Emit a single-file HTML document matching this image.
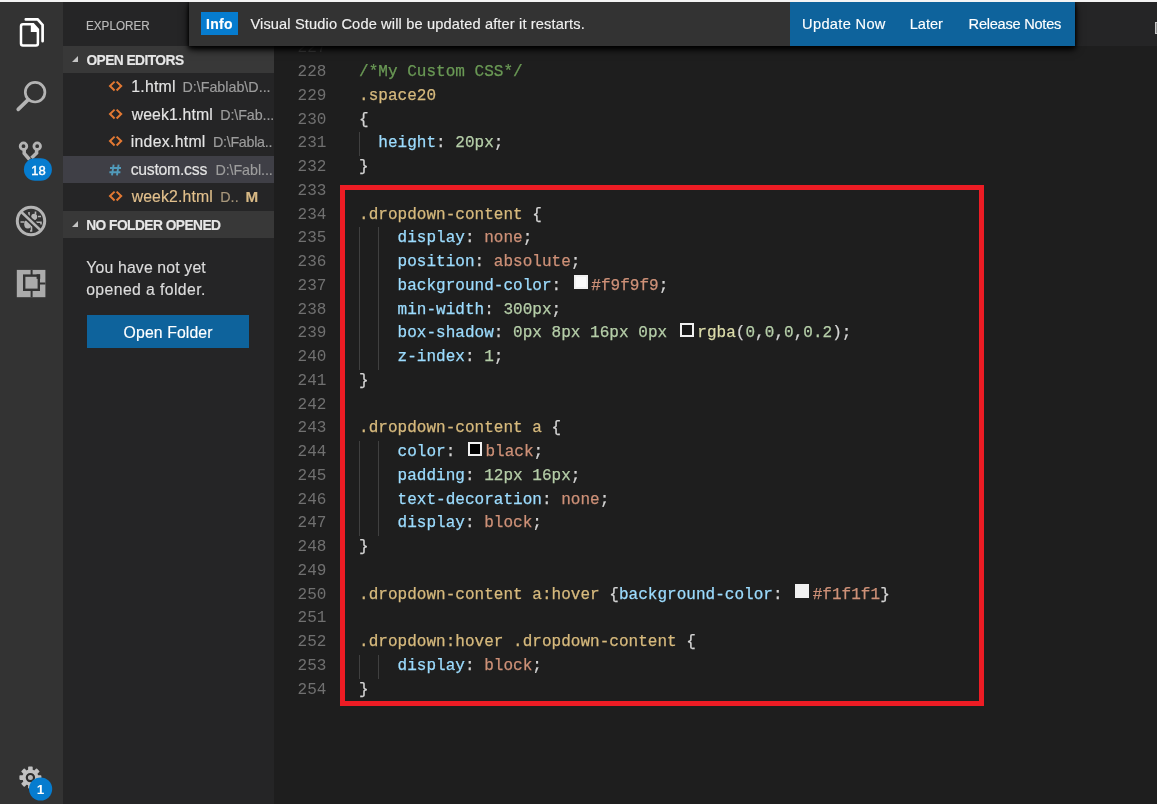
<!DOCTYPE html>
<html><head><meta charset="utf-8"><title>custom.css - Visual Studio Code</title>
<style>
*{box-sizing:border-box;margin:0;padding:0}
html,body{width:1157px;height:804px;overflow:hidden;background:#1e1e1e}
body{position:relative;font-family:"Liberation Sans",sans-serif;color:#ccc}
.abs{position:absolute}
.t{position:absolute;white-space:nowrap;line-height:20px;height:20px;-webkit-text-stroke:0.15px}
#root{position:absolute;left:0;top:0;width:1157px;height:804px;overflow:hidden;will-change:transform}
#topstrip{left:0;top:0;width:1157px;height:2px;background:#f4f4f4}
#activity{left:0;top:2px;width:62.5px;height:802px;background:#333333}
#sidebar{left:62.5px;top:2px;width:211.5px;height:802px;background:#252526}
#tabs{left:274px;top:2px;width:883px;height:43.75px;background:#252526}
#editor{left:274px;top:45.75px;width:883px;height:758.25px;background:#1e1e1e;overflow:hidden}
.sechead{left:62.5px;width:211.5px;height:27.5px;background:#383838}
.tw{position:absolute;width:0;height:0;border-left:6.5px solid transparent;border-bottom:6.5px solid #c4c4c4}
.sel{left:62.5px;width:211.5px;height:27.5px;background:#3f3f46}
.ln{position:absolute;left:0;width:52.5px;text-align:right;color:#707070;font-family:"Liberation Mono",monospace;font-size:16px;letter-spacing:0.025px;line-height:23.75px;height:23.75px;white-space:pre}
.cl{position:absolute;left:85.00px;color:#d4d4d4;font-family:"Liberation Mono",monospace;font-size:16px;letter-spacing:0.025px;line-height:23.75px;height:23.75px;white-space:pre;-webkit-text-stroke:0.25px}
.c{color:#6a9955}.s{color:#d7ba7d}.p{color:#9cdcfe}.v{color:#ce9178}.n{color:#b5cea8}.f{color:#dcdcaa}
.sw{display:inline-block;width:14px;height:14px;border:2px solid #f0f0f0;vertical-align:0.5px;margin:0 3.5px 0 3px;letter-spacing:0}
.g{position:absolute;width:1px;background:#404040}
svg{position:absolute;overflow:visible}
</style></head><body><div id="root">
<div id="activity" class="abs"></div>
<div id="sidebar" class="abs"></div>
<div id="tabs" class="abs"><div class="abs" style="left:881px;top:19.5px;width:14px;height:12px;border:1.6px solid #c8c8c8;background:#8a8a8a"></div></div>
<div id="editor" class="abs">
<div class="ln" style="top:-8.50px;color:#3c3c3c">227</div>
<div class="ln" style="top:15.25px">228</div>
<div class="cl" style="top:15.25px"><span class="c">/*My Custom CSS*/</span></div>
<div class="ln" style="top:39.00px">229</div>
<div class="cl" style="top:39.00px"><span class="s">.space20</span></div>
<div class="ln" style="top:62.75px">230</div>
<div class="cl" style="top:62.75px">{</div>
<div class="ln" style="top:86.50px">231</div>
<div class="cl" style="top:86.50px">  <span class="p">height</span>: <span class="n">20px</span>;</div>
<div class="ln" style="top:110.25px">232</div>
<div class="cl" style="top:110.25px">}</div>
<div class="ln" style="top:134.00px">233</div>
<div class="ln" style="top:157.75px">234</div>
<div class="cl" style="top:157.75px"><span class="s">.dropdown-content</span> {</div>
<div class="ln" style="top:181.50px">235</div>
<div class="cl" style="top:181.50px">    <span class="p">display</span>: <span class="v">none</span>;</div>
<div class="ln" style="top:205.25px">236</div>
<div class="cl" style="top:205.25px">    <span class="p">position</span>: <span class="v">absolute</span>;</div>
<div class="ln" style="top:229.00px">237</div>
<div class="cl" style="top:229.00px">    <span class="p">background-color</span>: <i class="sw" style="background:#f9f9f9"></i><span class="v">#f9f9f9</span>;</div>
<div class="ln" style="top:252.75px">238</div>
<div class="cl" style="top:252.75px">    <span class="p">min-width</span>: <span class="n">300px</span>;</div>
<div class="ln" style="top:276.50px">239</div>
<div class="cl" style="top:276.50px">    <span class="p">box-shadow</span>: <span class="n">0px</span> <span class="n">8px</span> <span class="n">16px</span> <span class="n">0px</span> <i class="sw" style="background:#181818"></i><span class="f">rgba</span>(<span class="n">0</span>,<span class="n">0</span>,<span class="n">0</span>,<span class="n">0.2</span>);</div>
<div class="ln" style="top:300.25px">240</div>
<div class="cl" style="top:300.25px">    <span class="p">z-index</span>: <span class="n">1</span>;</div>
<div class="ln" style="top:324.00px">241</div>
<div class="cl" style="top:324.00px">}</div>
<div class="ln" style="top:347.75px">242</div>
<div class="ln" style="top:371.50px">243</div>
<div class="cl" style="top:371.50px"><span class="s">.dropdown-content a</span> {</div>
<div class="ln" style="top:395.25px">244</div>
<div class="cl" style="top:395.25px">    <span class="p">color</span>: <i class="sw" style="background:#000000"></i><span class="v">black</span>;</div>
<div class="ln" style="top:419.00px">245</div>
<div class="cl" style="top:419.00px">    <span class="p">padding</span>: <span class="n">12px</span> <span class="n">16px</span>;</div>
<div class="ln" style="top:442.75px">246</div>
<div class="cl" style="top:442.75px">    <span class="p">text-decoration</span>: <span class="v">none</span>;</div>
<div class="ln" style="top:466.50px">247</div>
<div class="cl" style="top:466.50px">    <span class="p">display</span>: <span class="v">block</span>;</div>
<div class="ln" style="top:490.25px">248</div>
<div class="cl" style="top:490.25px">}</div>
<div class="ln" style="top:514.00px">249</div>
<div class="ln" style="top:537.75px">250</div>
<div class="cl" style="top:537.75px"><span class="s">.dropdown-content a:hover</span> {<span class="p">background-color</span>: <i class="sw" style="background:#f1f1f1"></i><span class="v">#f1f1f1</span>}</div>
<div class="ln" style="top:561.50px">251</div>
<div class="ln" style="top:585.25px">252</div>
<div class="cl" style="top:585.25px"><span class="s">.dropdown:hover .dropdown-content</span> {</div>
<div class="ln" style="top:609.00px">253</div>
<div class="cl" style="top:609.00px">    <span class="p">display</span>: <span class="v">block</span>;</div>
<div class="ln" style="top:632.75px">254</div>
<div class="cl" style="top:632.75px">}</div>
<i class="g" style="left:85.0px;top:86.50px;height:23.75px"></i>
<i class="g" style="left:85.0px;top:181.50px;height:142.50px"></i>
<i class="g" style="left:104.1px;top:181.50px;height:142.50px"></i>
<i class="g" style="left:85.0px;top:395.25px;height:95.00px"></i>
<i class="g" style="left:104.1px;top:395.25px;height:95.00px"></i>
<i class="g" style="left:85.0px;top:609.00px;height:23.75px"></i>
<i class="g" style="left:104.1px;top:609.00px;height:23.75px"></i>
</div>
<span id="explorer" class="t" style="left:85.80px;top:16.19px;font-size:13.60px;letter-spacing:0.000px;color:#bbbbbb;transform:scaleX(0.86);transform-origin:0 0;">EXPLORER</span>
<div class="abs sechead" style="top:45.75px"><i class="tw" style="left:9.8px;top:10.6px"></i></div>
<span id="openeditors" class="t" style="left:86.40px;top:50.74px;font-size:13.75px;letter-spacing:-0.545px;color:#e6e6e6;font-weight:bold;">OPEN EDITORS</span>
<div class="abs sel" style="top:155.75px"></div>
<span id="r1n" class="t" style="left:131.30px;top:77.23px;font-size:15.80px;letter-spacing:0.240px;color:#e4e4e4;">1.html</span>
<span id="r1p" class="t" style="left:182.40px;top:77.15px;font-size:14.30px;letter-spacing:0.000px;color:#9d9d9d;">D:\Fablab\D...</span>
<span id="r2n" class="t" style="left:131.70px;top:105.43px;font-size:15.80px;letter-spacing:0.122px;color:#e4e4e4;">week1.html</span>
<span id="r2p" class="t" style="left:220.20px;top:105.35px;font-size:14.30px;letter-spacing:-0.088px;color:#9d9d9d;">D:\Fab...</span>
<span id="r3n" class="t" style="left:130.70px;top:132.23px;font-size:15.80px;letter-spacing:0.300px;color:#e4e4e4;">index.html</span>
<span id="r3p" class="t" style="left:213.00px;top:132.15px;font-size:14.30px;letter-spacing:-0.289px;color:#9d9d9d;">D:\Fabla..</span>
<span id="r4n" class="t" style="left:130.70px;top:160.43px;font-size:15.80px;letter-spacing:-0.267px;color:#e4e4e4;">custom.css</span>
<span id="r4p" class="t" style="left:215.40px;top:160.35px;font-size:14.30px;letter-spacing:-0.067px;color:#9d9d9d;">D:\Fabl...</span>
<span id="r5n" class="t" style="left:131.70px;top:187.23px;font-size:15.80px;letter-spacing:0.122px;color:#e2c08d;">week2.html</span>
<span id="r5p" class="t" style="left:220.20px;top:187.15px;font-size:14.30px;letter-spacing:0.100px;color:#a8977c;">D..</span>
<span id="r5m" class="t" style="left:245.60px;top:187.09px;font-size:15.20px;letter-spacing:0.000px;color:#d8b985;font-weight:bold;">M</span>
<div class="abs sechead" style="top:210.75px"><i class="tw" style="left:9.8px;top:10.6px"></i></div>
<span id="nofolder" class="t" style="left:86.20px;top:215.74px;font-size:13.75px;letter-spacing:-0.533px;color:#e6e6e6;font-weight:bold;">NO FOLDER OPENED</span>
<span id="you1" class="t" style="left:86.30px;top:258.23px;font-size:15.80px;letter-spacing:0.153px;color:#dcdcdc;">You have not yet</span>
<span id="you2" class="t" style="left:86.20px;top:280.03px;font-size:15.80px;letter-spacing:0.387px;color:#dcdcdc;">opened a folder.</span>
<div class="abs" style="left:87px;top:315px;width:162px;height:32.5px;background:#0e639c"></div>
<span id="openfolder" class="t" style="left:123.60px;top:323.03px;font-size:15.80px;letter-spacing:0.110px;color:#ffffff;">Open Folder</span>
<svg style="left:106px;top:78.05px" width="20" height="16" viewBox="106 78.05 20 16"><path d="M114.6 81.65 L110 86.05 L114.6 90.55 M116.6 81.65 L121.2 86.05 L116.6 90.55" fill="none" stroke="#e37933" stroke-width="2"/></svg>
<svg style="left:106px;top:105.55px" width="20" height="16" viewBox="106 105.55 20 16"><path d="M114.6 109.15 L110 113.55 L114.6 118.05 M116.6 109.15 L121.2 113.55 L116.6 118.05" fill="none" stroke="#e37933" stroke-width="2"/></svg>
<svg style="left:106px;top:133.05px" width="20" height="16" viewBox="106 133.05 20 16"><path d="M114.6 136.65 L110 141.05 L114.6 145.55 M116.6 136.65 L121.2 141.05 L116.6 145.55" fill="none" stroke="#e37933" stroke-width="2"/></svg>
<svg style="left:106px;top:188.05px" width="20" height="16" viewBox="106 188.05 20 16"><path d="M114.6 191.65 L110 196.05 L114.6 200.55 M116.6 191.65 L121.2 196.05 L116.6 200.55" fill="none" stroke="#e37933" stroke-width="2"/></svg>
<svg style="left:106px;top:161.55px" width="20" height="16" viewBox="106 161.55 20 16"><path d="M113.6 164.15 L112 174.95 M118.6 164.15 L117 174.95 M110 167.55 H121 M109.4 171.75 H120.4" fill="none" stroke="#519aba" stroke-width="1.9"/></svg>
<!-- files icon -->
<svg style="left:0;top:0" width="62" height="62" viewBox="0 0 62 62">
<path d="M25.8 19.4 H37.6 L42.6 24.9 V41.2" fill="none" stroke="#fff" stroke-width="2.7" stroke-linejoin="miter" stroke-linecap="round"/>
<path d="M23 24.2 H33.2 L37.9 29.4 V43.6 a2 2 0 0 1 -2 2 H23 a2 2 0 0 1 -2 -2 V26.2 a2 2 0 0 1 2 -2 Z" fill="#333" stroke="#333" stroke-width="5.6"/>
<path d="M23 24.2 H33.2 L37.9 29.4 V43.6 a2 2 0 0 1 -2 2 H23 a2 2 0 0 1 -2 -2 V26.2 a2 2 0 0 1 2 -2 Z" fill="none" stroke="#fff" stroke-width="2.5"/>
<path d="M30.8 24 H33.4 L38 29.2 V32 H30.8 Z" fill="#fff"/>
</svg>
<!-- search -->
<svg style="left:0;top:62px" width="62" height="62" viewBox="0 62 62 62">
<circle cx="35.1" cy="92.2" r="9.8" fill="none" stroke="#b4b4b4" stroke-width="2.7"/>
<path d="M28.2 99.6 L18.2 109.4" stroke="#b4b4b4" stroke-width="3.6" stroke-linecap="round"/>
</svg>
<!-- git -->
<svg style="left:0;top:130px" width="62" height="62" viewBox="0 130 62 62">
<path d="M24.2 150 V153.4 L29.5 159.5 M36.6 150 V153 L31.5 158" fill="none" stroke="#b4b4b4" stroke-width="3.5"/>
<circle cx="23.5" cy="146.2" r="3.3" fill="#333" stroke="#b4b4b4" stroke-width="2.8"/>
<circle cx="37.2" cy="146.2" r="3.3" fill="#333" stroke="#b4b4b4" stroke-width="2.8"/>
<rect x="23.9" y="158.3" width="28" height="22.5" rx="11.2" ry="11.2" fill="#067ccf"/>
<text transform="translate(38.5 174.8) scale(0.25)" x="0" y="0" style="font-family:'Liberation Sans',sans-serif" font-size="52" fill="#fff" stroke="#fff" stroke-width="1.6" text-anchor="middle">18</text>
</svg>
<!-- debug -->
<svg style="left:0;top:198px" width="62" height="50" viewBox="0 198 62 50">
<g fill="none" stroke="#b4b4b4">
<ellipse cx="27.8" cy="224.3" rx="3.6" ry="4.2" fill="#b4b4b4" stroke="none"/>
<path d="M34.5 214.5 a3.2 3.2 0 0 1 0 6" stroke-width="0" fill="#b4b4b4"/>
<circle cx="34.2" cy="216.8" r="3" fill="#b4b4b4" stroke="none"/>
<path d="M20.5 222 H24.5 M29 212 V216.5 M35.5 211.5 V214 M38 216.5 H41 M36 222.3 H41 V224.5 M31.5 226 V231 H30" stroke-width="1.6"/>
</g>
<path d="M21.4 212 L39.9 229.6" stroke="#333" stroke-width="6"/>
<path d="M20.6 211.2 L41 230.6" stroke="#b4b4b4" stroke-width="2.6"/>
<circle cx="31" cy="221" r="13.7" fill="none" stroke="#b4b4b4" stroke-width="3"/>
</svg>
<!-- extensions -->
<svg style="left:0;top:262px" width="62" height="44" viewBox="0 262 62 44">
<rect x="16.8" y="269.9" width="28.6" height="27.3" fill="#ababab"/>
<path d="M31.6 269.9 V275 M31.6 290 V297.2 M40 283.4 H45.4" stroke="#333" stroke-width="2"/>
<rect x="24.2" y="275.6" width="14.6" height="14.2" fill="#ababab" stroke="#333" stroke-width="2.4"/>
<rect x="36.6" y="274.3" width="3.6" height="4.6" fill="#333"/>
</svg>
<!-- gear -->
<svg style="left:0;top:760px" width="62" height="44" viewBox="0 760 62 44">
<g transform="translate(30.4 777.6)">
<g fill="#c2c2c2">
<circle r="8"/>
<rect x="-2.3" y="-11" width="4.6" height="22" rx="0.8"/>
<rect x="-2.3" y="-11" width="4.6" height="22" rx="0.8" transform="rotate(45)"/>
<rect x="-2.3" y="-11" width="4.6" height="22" rx="0.8" transform="rotate(90)"/>
<rect x="-2.3" y="-11" width="4.6" height="22" rx="0.8" transform="rotate(135)"/>
</g>
<circle r="3.6" fill="#b8b8b8" stroke="#2c2c2c" stroke-width="2.2"/>
</g>
<circle cx="40.6" cy="789" r="11.6" fill="#067ccf"/>
<text x="40.6" y="793.8" style="font-family:'Liberation Sans',sans-serif" font-size="13.5" font-weight="bold" fill="#fff" text-anchor="middle">1</text>
</svg>

<div class="abs" style="left:340px;top:185px;width:644px;height:521px;border:5px solid #ed1c24"></div>
<div class="abs" style="left:189px;top:2px;width:886px;height:43.75px;background:#333333;box-shadow:0 0 3px 0 rgba(0,0,0,0.9),0 3px 8px 0 #000,0 3px 4px 0 rgba(0,0,0,0.6)"></div>
<div class="abs" style="left:201px;top:12px;width:37px;height:23px;background:#067ccf"></div>
<span id="info" class="t" style="left:206.00px;top:13.75px;font-size:14.00px;letter-spacing:0.267px;color:#ffffff;font-weight:bold;">Info</span>
<span id="msg" class="t" style="left:250.40px;top:13.54px;font-size:14.60px;letter-spacing:0.148px;color:#f0f0f0;">Visual Studio Code will be updated after it restarts.</span>
<div class="abs" style="left:790px;top:2px;width:285px;height:43.75px;background:#0e639c"></div>
<span id="b1" class="t" style="left:802.10px;top:13.64px;font-size:14.60px;letter-spacing:0.333px;color:#ffffff;">Update Now</span>
<span id="b2" class="t" style="left:909.80px;top:13.64px;font-size:14.60px;letter-spacing:-0.050px;color:#ffffff;">Later</span>
<span id="b3" class="t" style="left:968.60px;top:13.64px;font-size:14.60px;letter-spacing:-0.250px;color:#ffffff;">Release Notes</span>
<div id="topstrip" class="abs"></div>
</div></body></html>
